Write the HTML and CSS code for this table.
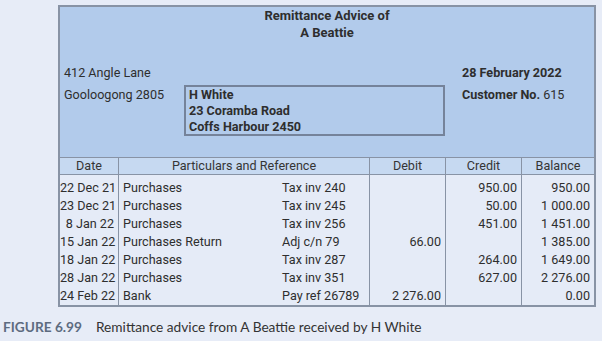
FILE: index.html
```html
<!DOCTYPE html>
<html lang="en">
<head>
<meta charset="utf-8">
<title>Remittance Advice</title>
<link rel="stylesheet" href="styles.css">
</head>
<body>
<div class="doc">
  <div class="head">
    <div class="title">
      <div>Remittance Advice of</div>
      <div>A Beattie</div>
    </div>
    <div class="info">
      <div class="from">
        <div>412 Angle Lane</div>
        <div>Gooloogong 2805</div>
      </div>
      <div class="to">
        <div>H White</div>
        <div>23 Coramba Road</div>
        <div>Coffs Harbour 2450</div>
      </div>
      <div class="meta">
        <div class="b">28 February 2022</div>
        <div><span class="b">Customer No.</span> 615</div>
      </div>
    </div>
  </div>
  <table class="ledger">
    <colgroup>
      <col class="c-date"><col class="c-part"><col class="c-ref"><col class="c-num"><col class="c-num"><col class="c-bal">
    </colgroup>
    <thead>
      <tr>
        <th>Date</th>
        <th colspan="2" class="sep">Particulars and Reference</th>
        <th class="sep">Debit</th>
        <th class="sep">Credit</th>
        <th class="sep">Balance</th>
      </tr>
    </thead>
    <tbody>
      <tr class="first"><td class="date">22 Dec 21</td><td class="sep">Purchases</td><td class="ref">Tax inv 240</td><td class="num sep"></td><td class="num sep">950.00</td><td class="num sep">950.00</td></tr>
      <tr><td class="date">23 Dec 21</td><td class="sep">Purchases</td><td class="ref">Tax inv 245</td><td class="num sep"></td><td class="num sep">50.00</td><td class="num sep">1 000.00</td></tr>
      <tr><td class="date">8 Jan 22</td><td class="sep">Purchases</td><td class="ref">Tax inv 256</td><td class="num sep"></td><td class="num sep">451.00</td><td class="num sep">1 451.00</td></tr>
      <tr><td class="date">15 Jan 22</td><td class="sep">Purchases Return</td><td class="ref">Adj c/n 79</td><td class="num sep">66.00</td><td class="num sep"></td><td class="num sep">1 385.00</td></tr>
      <tr><td class="date">18 Jan 22</td><td class="sep">Purchases</td><td class="ref">Tax inv 287</td><td class="num sep"></td><td class="num sep">264.00</td><td class="num sep">1 649.00</td></tr>
      <tr><td class="date">28 Jan 22</td><td class="sep">Purchases</td><td class="ref">Tax inv 351</td><td class="num sep"></td><td class="num sep">627.00</td><td class="num sep">2 276.00</td></tr>
      <tr><td class="date">24 Feb 22</td><td class="sep">Bank</td><td class="ref">Pay ref 26789</td><td class="num sep">2 276.00</td><td class="num sep"></td><td class="num sep">0.00</td></tr>
    </tbody>
  </table>
</div>
<p class="caption"><span class="fig">FIGURE 6.99</span>Remittance advice from A Beattie received by H White</p>
</body>
</html>
```

FILE: styles.css
```css
html, body {
  margin: 0;
  padding: 0;
}
body {
  background: #e7ecf7;
  font-family: Roboto, "Liberation Sans", sans-serif;
  font-size: 12.6px;
  color: #2e2e2e;
  padding-top: 5px;
}
.doc {
  box-sizing: border-box;
  width: 538px;
  margin-left: 58px;
  border: 2px solid #8893a5;
  background: #b2cbeb;
}
.head {
  padding: 0 0 21px 0;
}
.title {
  text-align: center;
  font-weight: 700;
  font-size: 13px;
  line-height: 17px;
}
.info {
  display: flex;
  margin-top: 21px;
  line-height: 22px;
}
.from {
  width: 120px;
  padding-left: 4px;
}
.to {
  box-sizing: border-box;
  width: 261px;
  height: 51px;
  margin-top: 23px;
  border: 2px solid #75839a;
  padding: 0 3px;
  font-weight: 700;
  line-height: 16px;
}
.meta {
  margin-left: 17px;
}
.b {
  font-weight: 700;
}
.ledger {
  width: 534px;
  table-layout: fixed;
  border-collapse: separate;
  border-spacing: 0;
  background: #e5ebf7;
}
.c-date { width: 58px; }
.c-part { width: 161px; }
.c-ref { width: 90px; }
.c-num { width: 76px; }
.c-bal { width: 73px; }
.ledger th {
  font-weight: 400;
  background: #c6d9f1;
  border-top: 1px solid #8893a5;
  border-bottom: 1px solid #8893a5;
  height: 16px;
  line-height: 16px;
  padding: 0;
  text-align: center;
  color: #353535;
}
.ledger td {
  line-height: 18px;
  padding: 0 4px;
  white-space: nowrap;
}
.ledger tr.first td {
  padding-top: 4px;
}
.ledger .sep {
  border-left: 1px solid #8893a5;
}
.ledger .date {
  text-align: right;
  padding: 0 4px 0 0;
}
.ledger .ref {
  padding-left: 3px;
}
.ledger .num {
  text-align: right;
}
.caption {
  margin: 10px 0 0 3px;
  line-height: 20px;
  font-family: Lato, "Open Sans", sans-serif;
  font-size: 13.7px;
  color: #333;
}
.fig {
  font-weight: 700;
  color: #5d6b80;
  margin-right: 14px;
}
```
